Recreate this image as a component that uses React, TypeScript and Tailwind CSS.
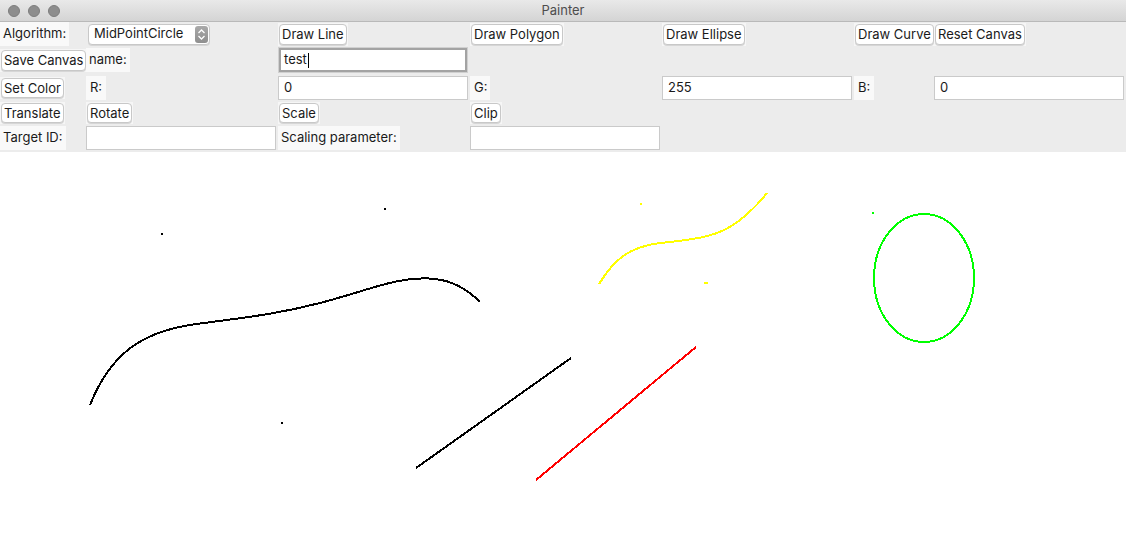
import React from "react";

const font = "font-[Inter,sans-serif]";

function Btn({ children, tall = false }: { children: React.ReactNode; tall?: boolean }) {
  return (
    <div className="justify-self-start self-center flex items-center bg-[#f6f6f6] p-[1px]">
      <button
        className={`${tall ? "h-[21px]" : "h-[20px]"} px-[2px] bg-white border border-[#c8c8c8] rounded-[4px] text-[13px] leading-none text-[#1a1a1a] shadow-[0_1px_0_#d6d6d6] whitespace-nowrap`}
      >
        {children}
      </button>
    </div>
  );
}

function Label({ children, narrow = false }: { children: React.ReactNode; narrow?: boolean }) {
  return (
    <div
      className={`justify-self-start self-center h-[24px] bg-[#f9f9f9] flex items-center text-[13px] text-[#1a1a1a] whitespace-nowrap ${
        narrow ? "w-[20px] pl-[4px]" : "px-[3px]"
      }`}
    >
      {children}
    </div>
  );
}

function Field({ value = "" }: { value?: string }) {
  return (
    <div className="self-center h-[24px] w-full bg-white border border-[#cacaca] flex items-center pl-[5px] text-[13px] text-[#1a1a1a]">
      {value}
    </div>
  );
}

function Empty() {
  return <div />;
}

export default function App() {
  return (
    <div className={`w-[1126px] h-[558px] flex flex-col bg-white overflow-hidden ${font}`}>
      {/* title bar */}
      <div className="h-[22px] shrink-0 relative flex items-center bg-gradient-to-b from-[#e9e9e9] to-[#d4d4d4] border-b border-[#b9b9b9]">
        <div className="flex items-center gap-[8px] ml-[8px]">
          <span className="w-[12px] h-[12px] rounded-full bg-[#8d8d8d] border border-[#7d7d7d]" />
          <span className="w-[12px] h-[12px] rounded-full bg-[#8d8d8d] border border-[#7d7d7d]" />
          <span className="w-[12px] h-[12px] rounded-full bg-[#8d8d8d] border border-[#7d7d7d]" />
        </div>
        <div className="absolute inset-0 flex items-center justify-center text-[13px] text-[#4d4d4d]">Painter</div>
      </div>

      {/* controls */}
      <div className="shrink-0 bg-[#ececec] grid grid-cols-[84px_190px_190px_190px_190px_78px_190px] grid-rows-[24px_28px_28px_22px_28px] gap-x-[2px]">
        {/* row 1 */}
        <Label>Algorithm:</Label>
        <div className="justify-self-start self-center ml-[2px] h-[21px] w-[122px] bg-white border border-[#c8c8c8] rounded-[4px] flex items-center justify-between pl-[5px] pr-[1px] text-[13px] text-[#1a1a1a] shadow-[0_1px_0_#d6d6d6]">
          <span>MidPointCircle</span>
          <span className="w-[13px] h-[17px] rounded-[3px] bg-gradient-to-b from-[#a9a9a9] to-[#8f8f8f] flex items-center justify-center">
            <svg width="9" height="13" viewBox="0 0 9 13">
              <path d="M1.5 5 L4.5 2 L7.5 5" fill="none" stroke="#ffffff" strokeWidth="1.3" />
              <path d="M1.5 8 L4.5 11 L7.5 8" fill="none" stroke="#ffffff" strokeWidth="1.3" />
            </svg>
          </span>
        </div>
        <Btn tall>Draw Line</Btn>
        <Btn tall>Draw Polygon</Btn>
        <Btn tall>Draw Ellipse</Btn>
        <Btn tall>Draw Curve</Btn>
        <Btn tall>Reset Canvas</Btn>

        {/* row 2 */}
        <Btn tall>Save Canvas</Btn>
        <Label>name:</Label>
        <div className="self-center h-[26px] w-[190px] bg-white border border-[#d0d0d0] shadow-[inset_0_0_0_2px_#a3a3a3] flex items-center pl-[5px] text-[13px] text-[#1a1a1a]">
          <span>test</span>
          <span className="inline-block w-[1px] h-[15px] bg-black ml-[1px]" />
        </div>
        <Empty />
        <Empty />
        <Empty />
        <Empty />

        {/* row 3 */}
        <Btn>Set Color</Btn>
        <Label narrow>R:</Label>
        <Field value="0" />
        <Label narrow>G:</Label>
        <Field value="255" />
        <Label narrow>B:</Label>
        <Field value="0" />

        {/* row 4 */}
        <Btn>Translate</Btn>
        <Btn>Rotate</Btn>
        <Btn>Scale</Btn>
        <Btn>Clip</Btn>
        <Empty />
        <Empty />
        <Empty />

        {/* row 5 */}
        <Label>Target ID:</Label>
        <Field />
        <Label>Scaling parameter:</Label>
        <Field />
        <Empty />
        <Empty />
        <Empty />
      </div>

      {/* canvas */}
      <div className="flex-1 bg-white">
        <svg width="1126" height="406" viewBox="0 152 1126 406" shapeRendering="crispEdges">
          {/* black curve */}
          <path
            d="M90,405 C110,355 140,333 190,325 C230,319 270,316 320,303 C370,290 400,275 435,279 C455,281 470,292 480,302"
            fill="none"
            stroke="#000000"
            strokeWidth="2"
          />
          {/* black dots */}
          <rect x="161" y="233" width="2" height="2" fill="#000" />
          <rect x="384" y="208" width="2" height="2" fill="#000" />
          <rect x="281" y="422" width="2" height="2" fill="#000" />
          {/* black line */}
          <line x1="416" y1="468" x2="571" y2="358" stroke="#000000" strokeWidth="2" />
          {/* red line */}
          <line x1="536" y1="480" x2="696" y2="347" stroke="#ff0000" strokeWidth="2" />
          {/* yellow curve */}
          <path
            d="M599,284 C615,258 630,247 660,243 C700,239 720,236 740,220 C750,212 760,202 767,193"
            fill="none"
            stroke="#ffff00"
            strokeWidth="2"
          />
          <rect x="640" y="203" width="2" height="2" fill="#ffff00" />
          <rect x="704" y="282" width="4" height="2" fill="#ffff00" />
          {/* green */}
          <rect x="872" y="212" width="2" height="2" fill="#00ff00" />
          <ellipse cx="924" cy="278" rx="50" ry="64" fill="none" stroke="#00ff00" strokeWidth="2" />
        </svg>
      </div>
    </div>
  );
}
